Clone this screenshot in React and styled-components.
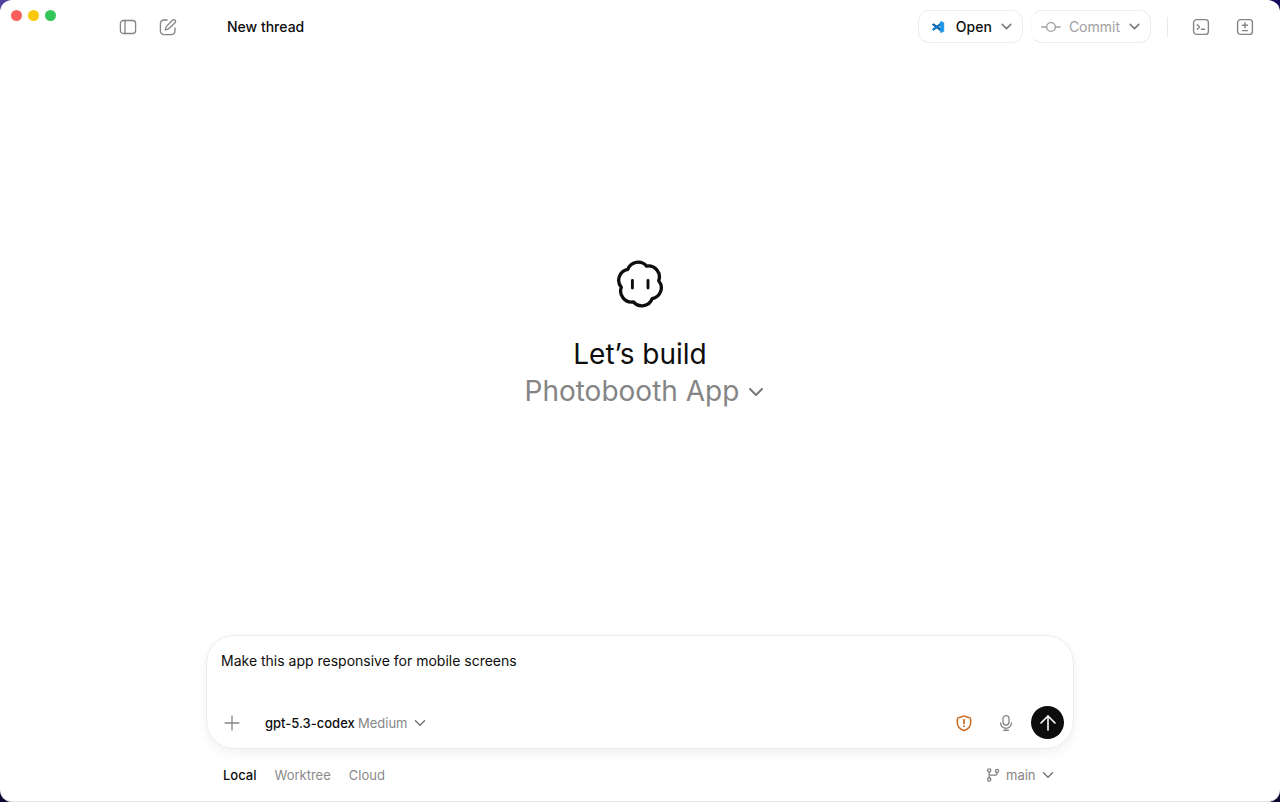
import { useState } from 'react'
import styled, { createGlobalStyle } from 'styled-components'
import { ArrowUp, ChevronDown, Plus } from 'lucide-react'


export default function App(){
    const [target, setTarget] = useState('Local')

    return(
        <>
            <GlobalStyle />
            <Backdrop>
                <Window>
                    <Header>
                        <Lights>
                            <Light $color="#f95f5b" aria-label="Close" />
                            <Light $color="#fbc80b" aria-label="Minimize" />
                            <Light $color="#34c659" aria-label="Zoom" />
                        </Lights>
                        <Tools>
                            <IconButton aria-label="Toggle sidebar"><SidebarIcon /></IconButton>
                            <IconButton aria-label="New thread"><ComposeIcon /></IconButton>
                        </Tools>
                        <Title>New thread</Title>
                        <Actions>
                            <SplitButton>
                                <MainAction><VsCodeIcon />Open</MainAction>
                                <MenuAction aria-label="Open with"><Chevron size={17} /></MenuAction>
                            </SplitButton>
                            <SplitButton $muted>
                                <MainAction $muted><CommitIcon />Commit</MainAction>
                                <MenuAction aria-label="Commit options"><Chevron size={17} /></MenuAction>
                            </SplitButton>
                            <Divider />
                            <IconButton aria-label="Terminal"><TerminalIcon /></IconButton>
                            <IconButton aria-label="Show changes"><DiffIcon /></IconButton>
                        </Actions>
                    </Header>

                    <Hero>
                        <CodexLogo />
                        <Heading>Let’s build</Heading>
                        <Picker>
                            <ProjectSelect aria-label="Project">
                                <option>Photobooth App</option>
                            </ProjectSelect>
                            <Chevron size={24} />
                        </Picker>
                    </Hero>

                    <Bottom>
                        <Composer>
                            <Prompt aria-label="Prompt" rows={1} defaultValue="Make this app responsive for mobile screens" />
                            <ComposerBar>
                                <IconButton type="button" aria-label="Add attachment"><Plus size={24} strokeWidth={1.3} /></IconButton>
                                <Models>
                                    <Select $strong aria-label="Model">
                                        <option>gpt-5.3-codex</option>
                                    </Select>
                                    <Picker>
                                        <Select $arrow aria-label="Reasoning effort">
                                            <option>Medium</option>
                                        </Select>
                                        <Chevron size={18} />
                                    </Picker>
                                </Models>
                                <Spacer />
                                <Extras>
                                    <IconButton type="button" $color="#c96a26" aria-label="Permissions"><ShieldIcon /></IconButton>
                                    <IconButton type="button" aria-label="Dictate"><MicIcon /></IconButton>
                                </Extras>
                                <Send aria-label="Send"><ArrowUp size={24} strokeWidth={1.6} /></Send>
                            </ComposerBar>
                        </Composer>
                        <Footer>
                            {['Local', 'Worktree', 'Cloud'].map((name) => (
                                <Tab key={name} $active={name === target} onClick={() => setTarget(name)}>{name}</Tab>
                            ))}
                            <Spacer />
                            <BranchIcon />
                            <Picker>
                                <Select $arrow aria-label="Branch">
                                    <option>main</option>
                                </Select>
                                <Chevron size={18} />
                            </Picker>
                        </Footer>
                    </Bottom>
                </Window>
            </Backdrop>
        </>
    )
}

function SidebarIcon(){
    return(
        <Icon width="18" height="18" viewBox="0 0 18 18">
            <rect x="1.4" y="2.5" width="15.2" height="13" rx="3" />
            <path d="M6 2.5v13" />
        </Icon>
    )
}

function ComposeIcon(){
    return(
        <Icon width="18" height="18" viewBox="0 0 18 18">
            <path d="M8.2 2H5a3.6 3.6 0 0 0-3.6 3.600v7.400A3.600 3.600 0 0 0 5 16.600h7.400a3.600 3.600 0 0 0 3.600-3.600V9.800" />
            <path d="M6.300 11.800c.1-1.700.6-2.900 1.600-3.900l5.600-5.700a1.750 1.750 0 0 1 2.500 2.500l-5.700 5.600c-1 1-2.300 1.500-4 1.500z" />
        </Icon>
    )
}

function VsCodeIcon(){
    return(
        <svg width="14" height="14" viewBox="0 0 14 14" aria-hidden="true">
            <path d="M1.400 4.600 10 11.200V9L2.600 3.800z" fill="#0b63a8" stroke="#0b63a8" strokeLinejoin="round" />
            <path d="M1.400 9.400 10 2.800V5L2.600 10.200z" fill="#1478c2" stroke="#1478c2" strokeLinejoin="round" />
            <path d="M9.800 1.500 12.700 2.800v8.400L9.800 12.500z" fill="#2296e6" stroke="#2296e6" strokeLinejoin="round" />
        </svg>
    )
}

function CommitIcon(){
    return(
        <Icon width="20" height="18" viewBox="0 0 20 18" strokeWidth="1.4">
            <circle cx="10" cy="9" r="4.400" />
            <path d="M.8 9h4.800M14.400 9h4.800" />
        </Icon>
    )
}

function TerminalIcon(){
    return(
        <Icon width="18" height="18" viewBox="0 0 18 18" strokeWidth="1.4">
            <rect x="1.600" y="1.600" width="14.800" height="14.800" rx="3" />
            <path d="M5.300 6.800 7.500 9l-2.200 2.200M9.500 11.200h3" />
        </Icon>
    )
}

function DiffIcon(){
    return(
        <Icon width="18" height="18" viewBox="0 0 18 18" strokeWidth="1.4">
            <rect x="1.600" y="1.600" width="14.800" height="14.800" rx="3" />
            <path d="M9 4.800v5M6.500 7.300h5M6.500 12.600h5" />
        </Icon>
    )
}

function CodexLogo(){
    return(
        <svg width="48" height="48" viewBox="0 0 48 48" fill="none" stroke="#0d0d0d" strokeWidth="3.3" strokeLinecap="round" strokeLinejoin="round" aria-hidden="true">
            <path d="M30.500 6.100A11 11 0 0 1 42.700 20.700A11 11 0 0 1 36.200 38.600A11 11 0 0 1 17.500 41.900A11 11 0 0 1 5.300 27.300A11 11 0 0 1 11.800 9.400A11 11 0 0 1 30.500 6.100z" />
            <path d="M16.400 20.400v7.600M32 20.400v7.600" strokeWidth="2.900" />
        </svg>
    )
}

function ShieldIcon(){
    return(
        <Icon width="18" height="18" viewBox="0 0 18 18" strokeWidth="1.5">
            <path d="M8.200 2.100a1.700 1.700 0 0 1 1.600 0c1.300.7 2.600 1.100 4.100 1.300a2 2 0 0 1 1.800 2v3.200c0 3.700-2.200 6.200-5.900 7.700a2 2 0 0 1-1.600 0C4.500 14.800 2.300 12.300 2.300 8.600V5.400a2 2 0 0 1 1.800-2c1.500-.2 2.800-.6 4.100-1.300z" />
            <path d="M9 5.800v3.600" strokeWidth="1.800" />
            <circle cx="9" cy="12.200" r=".5" strokeWidth="1" fill="currentColor" />
        </Icon>
    )
}

function MicIcon(){
    return(
        <Icon width="18" height="18" viewBox="0 0 18 18">
            <rect x="6" y="1.600" width="6" height="9.400" rx="3" />
            <path d="M3.500 8.800a5.500 5.500 0 0 0 11 0M9 14.300v2.100M6.600 16.400h4.800" />
        </Icon>
    )
}

function BranchIcon(){
    return(
        <Icon width="14" height="14" viewBox="0 0 14 14">
            <circle cx="3.200" cy="2.400" r="1.600" />
            <circle cx="3.200" cy="11.600" r="1.600" />
            <circle cx="11" cy="2.900" r="1.600" />
            <path d="M3.200 4v6M11 4.500v.7c0 1.300-.8 2-2 2H3.200" />
        </Icon>
    )
}


const GlobalStyle = createGlobalStyle`
    *{
        box-sizing: border-box;
    }
    body{
        margin: 0;
        font-family: Inter, "Liberation Sans", sans-serif;
        font-size: 14px;
        color: #0d0d0d;
    }
    button, select, textarea{
        margin: 0;
        padding: 0;
        border: none;
        background: none;
        font: inherit;
        color: inherit;
    }
    svg{
        flex-shrink: 0;
    }
`

const Backdrop = styled.div`
    background: linear-gradient(90deg, #5143a0, #17085c) top / 100% 50% no-repeat, #0b0833;
`

const Window = styled.div`
    display: flex;
    flex-direction: column;
    min-height: 100vh;
    background: #fff;
    border-bottom: 1px solid #e6e6e6;
    border-radius: 12px;
`

const Header = styled.header`
    display: flex;
    align-items: center;
    height: 53px;
    padding: 0 21px 0 11px;
`

const Lights = styled.div`
    display: flex;
    gap: 6px;
    align-self: flex-start;
    padding-top: 10px;
`

const Light = styled.button`
    width: 11px;
    height: 11px;
    border-radius: 50%;
    background: ${(props) => props.$color};
`

const Tools = styled.div`
    display: flex;
    gap: 12px;
    margin-left: 58px;
`

const Title = styled.h1`
    flex: 1;
    margin: 0 0 0 45px;
    font-size: 14px;
    font-weight: 500;
`

const Actions = styled.div`
    display: flex;
    align-items: center;
    gap: 8px;
`

const SplitButton = styled.div`
    display: flex;
    align-items: center;
    height: 33px;
    padding: 0 7px 0 ${(props) => (props.$muted ? '9px' : '12px')};
    border: 1px solid #ececec;
    border-left-color: ${(props) => (props.$muted ? '#f9f9f9' : '#ececec')};
    border-radius: 11px;
`

const MainAction = styled.button`
    display: flex;
    align-items: center;
    gap: ${(props) => (props.$muted ? '8px' : '11px')};
    font-weight: ${(props) => (props.$muted ? 400 : 500)};
    color: ${(props) => (props.$muted ? '#a0a0a0' : '#0d0d0d')};
`

const Icon = styled.svg.attrs((props) => ({
    fill: 'none',
    stroke: 'currentColor',
    strokeWidth: props.strokeWidth || 1.3,
    strokeLinecap: 'round',
    strokeLinejoin: 'round',
    'aria-hidden': true,
}))`
    display: block;
`

const Chevron = styled(ChevronDown).attrs({ strokeWidth: 2 })`
    color: #777;
    pointer-events: none;
`

const MenuAction = styled.button`
    display: flex;
    margin-left: 6px;
`

const Divider = styled.div`
    width: 1px;
    height: 20px;
    margin: 0 11px 0 8px;
    background: #e8e8e8;
`

const IconButton = styled.button`
    display: flex;
    align-items: center;
    justify-content: center;
    width: 28px;
    height: 28px;
    color: ${(props) => props.$color || '#858585'};

    ${Divider} ~ & + &{
        margin-left: 8px;
    }
`

const Hero = styled.main`
    display: flex;
    flex: 1;
    flex-direction: column;
    align-items: center;
    justify-content: center;
    padding-bottom: 18px;
`

const Heading = styled.h2`
    margin: 28px 0 0;
    font-size: 28px;
    font-weight: 400;
    line-height: 37px;
`

// the chevron lies over the select's right padding
const Picker = styled.div`
    display: flex;
    align-items: center;

    ${Chevron}{
        margin-left: -16px;
    }
`

const Select = styled.select`
    appearance: none;
    padding-right: ${(props) => (props.$arrow ? '19px' : 0)};
    outline: none;
    font-size: 13px;
    font-weight: ${(props) => (props.$strong ? 500 : 400)};
    line-height: 20px;
    color: ${(props) => (props.$strong ? '#0d0d0d' : '#858585')};
`

const ProjectSelect = styled(Select)`
    padding: 0 20px 0 12px;
    font-size: 28px;
    line-height: 37px;
`

const Bottom = styled.div`
    width: 100%;
    max-width: 900px;
    margin: 0 auto;
    padding: 0 16px;
`

const Composer = styled.form`
    padding: 14px 9px 9px 11px;
    border: 1px solid #ebebeb;
    border-radius: 28px;
    box-shadow: 0 4px 12px rgba(0, 0, 0, 0.06);
`

const Prompt = styled.textarea`
    display: block;
    width: 100%;
    height: 56px;
    padding: 0 3px;
    outline: none;
    resize: none;
    line-height: 22px;
`

const ComposerBar = styled.div`
    display: flex;
    align-items: center;
    gap: 11px;
`

const Models = styled.div`
    display: flex;
    align-items: center;
    gap: 3px;
    margin-left: 8px;
`

const Extras = styled.div`
    display: flex;
    gap: 14px;
`

const Spacer = styled.div`
    flex: 1;
`

const Send = styled.button.attrs({ type: 'button' })`
    display: flex;
    align-items: center;
    justify-content: center;
    width: 33px;
    height: 33px;
    border-radius: 50%;
    background: #0d0d0d;
    color: #fff;
`

const Footer = styled.footer`
    display: flex;
    align-items: center;
    gap: 18px;
    height: 52px;
    padding: 0 17px;
    color: #858585;

    ${Icon}{
        margin-right: -12px;
    }
`

const Tab = styled.button`
    font-size: 13px;
    font-weight: ${(props) => (props.$active ? 500 : 400)};
    color: ${(props) => (props.$active ? '#0d0d0d' : '#8a8a8a')};
`
